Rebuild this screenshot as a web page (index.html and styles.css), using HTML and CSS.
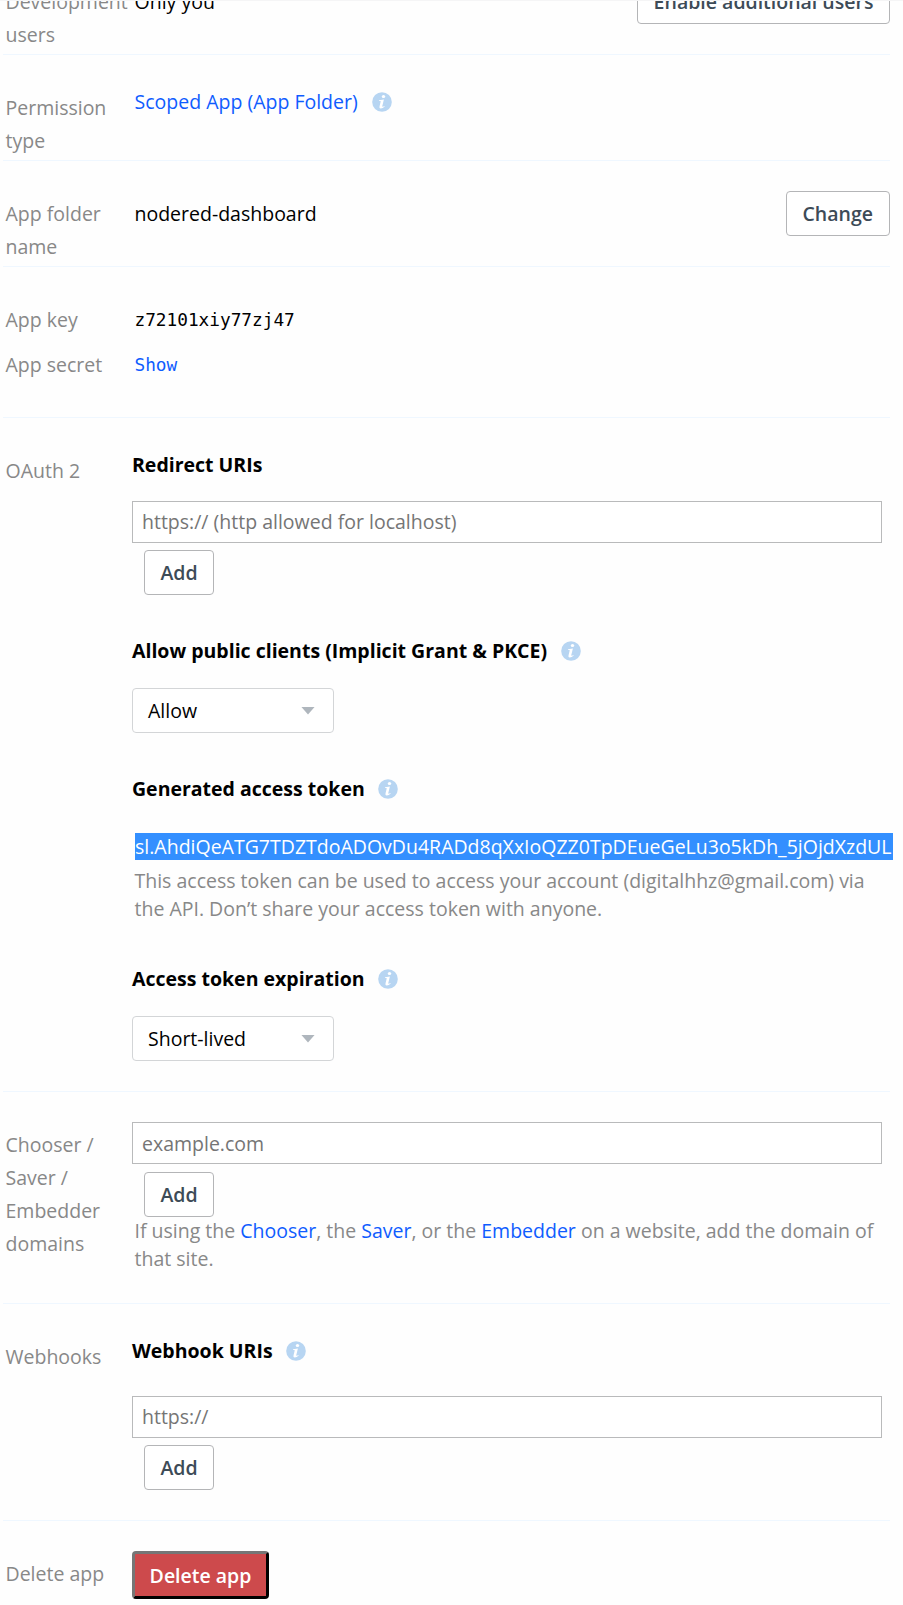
FILE: index.html
```html
<!DOCTYPE html>
<html lang="en">
<head>
<meta charset="utf-8">
<title>App settings</title>
<link rel="stylesheet" href="styles.css">
</head>
<body>
<svg class="sprite" aria-hidden="true">
  <symbol id="info" viewBox="0 0 20 20">
    <circle cx="10" cy="10" r="9.8" fill="#b7d5f2"/>
    <ellipse cx="11.5" cy="4.6" rx="1.7" ry="1.5" fill="#fff"/>
    <path d="M7.1 8.2 L11.9 7.6 L10.3 14 Q10.1 15 11 14.7 L12.4 13.9 L12.7 14.5 Q10.6 16.7 8.6 16.6 Q7 16.4 7.5 14.5 L8.7 9.6 Q8.8 9 8.2 9 L6.9 9 Z" fill="#fff"/>
  </symbol>
</svg>
<main class="settings">
  <section class="row">
    <div class="label">Development users</div>
    <div class="content split">
      <div class="value">Only you</div>
      <button class="btn enable">Enable additional users</button>
    </div>
  </section>
  <section class="row">
    <div class="label">Permission type</div>
    <div class="content">
      <div class="value scoped"><a>Scoped App (App Folder)</a><svg class="info"><use href="#info"/></svg></div>
    </div>
  </section>
  <section class="row">
    <div class="label">App folder name</div>
    <div class="content split">
      <div class="value">nodered-dashboard</div>
      <button class="btn">Change</button>
    </div>
  </section>
  <section class="row keys">
    <div class="label">App key</div>
    <div class="content"><div class="value mono">z72101xiy77zj47</div></div>
    <div class="label next">App secret</div>
    <div class="content next"><div class="value mono"><a>Show</a></div></div>
  </section>
  <section class="row oauth">
    <div class="label">OAuth 2</div>
    <div class="content">
      <h4 class="heading">Redirect URIs</h4>
      <input class="field" placeholder="https:// (http allowed for localhost)">
      <button class="btn add">Add</button>
      <h4 class="heading allow">Allow public clients (Implicit Grant &amp; PKCE)<svg class="info"><use href="#info"/></svg></h4>
      <div class="select">Allow<span class="caret"></span></div>
      <h4 class="heading generated">Generated access token<svg class="info"><use href="#info"/></svg></h4>
      <div class="token">sl.AhdiQeATG7TDZTdoADOvDu4RADd8qXxIoQZZ0TpDEueGeLu3o5kDh_5jOjdXzdUL</div>
      <p class="help">This access token can be used to access your account (digitalhhz@gmail.com) via<br>the API. Don’t share your access token with anyone.</p>
      <h4 class="heading expiration">Access token expiration<svg class="info"><use href="#info"/></svg></h4>
      <div class="select short">Short-lived<span class="caret"></span></div>
    </div>
  </section>
  <section class="row domains">
    <div class="label">Chooser / Saver / Embedder domains</div>
    <div class="content">
      <input class="field" placeholder="example.com">
      <button class="btn add">Add</button>
      <p class="help">If using the <a>Chooser</a>, the <a>Saver</a>, or the <a>Embedder</a> on a website, add the domain of<br>that site.</p>
    </div>
  </section>
  <section class="row webhooks">
    <div class="label">Webhooks</div>
    <div class="content">
      <h4 class="heading">Webhook URIs<svg class="info"><use href="#info"/></svg></h4>
      <input class="field" placeholder="https://">
      <button class="btn add">Add</button>
    </div>
  </section>
  <section class="row delete">
    <div class="label">Delete app</div>
    <div class="content"><button class="danger">Delete app</button></div>
  </section>
</main>
</body>
</html>
```
FILE: styles.css
```css
* { box-sizing: border-box; }
html { height: 1605px; overflow: hidden; background: #fefefe; }
body {
  margin: 0;
  height: 1605px;
  overflow: hidden;
  border-top: 1px solid #f5f5f6;
  font: 19.5px/28px "Open Sans", sans-serif;
  color: #000;
}
.sprite { display: none; }
.settings { width: 887px; margin: -52px 0 0 3px; }
.row {
  display: grid;
  grid-template-columns: 129px 1fr;
  align-content: start;
  height: 106px;
  border-bottom: 1px solid #eff7ff;
}
.label { width: 110px; padding: 36px 0 0 2.5px; line-height: 33px; color: #888; }
.content { padding-top: 30px; min-width: 0; }
.split { display: flex; justify-content: space-between; align-items: flex-start; }
.value { display: flex; align-items: center; padding-left: 2.5px; margin-top: 9px; white-space: nowrap; }
.value.scoped { margin-top: 3px; }
a { color: #0f5cff; }
.info { width: 20px; height: 20px; margin-left: 14px; flex: none; }
.btn {
  display: block;
  height: 45px;
  padding: 0 16px;
  border: 1px solid #b4b5b7;
  border-radius: 4px;
  background: #fff;
  color: #3d4b57;
  font: 600 19.5px/28px "Open Sans", sans-serif;
  white-space: nowrap;
}
.btn.enable { width: 253px; padding: 0; }
.btn.add { width: 70px; margin: 7px 0 0 12px; padding: 0; }
.keys { height: 151px; }
.mono { font-family: Consolas, "DejaVu Sans Mono", monospace; font-size: 17.75px; }
.keys .next { padding-top: 12px; }
.keys .content.next { padding-top: 6px; }
.keys .label { height: 69px; }
.keys .label.next { height: 45px; }
.field {
  display: block;
  width: 750px;
  height: 42px;
  padding: 0 9px 2px;
  border: 1px solid #b9babb;
  border-radius: 0;
  background: #fff;
  font: 19.5px/28px "Open Sans", sans-serif;
}
.domains .field { padding-bottom: 0; }
.field::placeholder { color: #757575; opacity: 1; }
.heading { display: flex; align-items: center; margin: 0; font-size: 19.5px; line-height: 28px; font-weight: 700; white-space: nowrap; }
.heading .info { margin: 0 0 1px 13.5px; }
.oauth { height: 674px; }
.oauth .content, .webhooks .content { padding-top: 33px; }
.heading + .field { margin-top: 22px; }
.allow { margin-top: 42px; }
.select {
  display: flex;
  align-items: center;
  justify-content: space-between;
  width: 202px;
  height: 45px;
  margin-top: 23px;
  padding: 0 18px 0 15px;
  border: 1px solid #d3d5d7;
  border-radius: 4px;
  background: #fff;
}
.caret { width: 14px; height: 8px; background: #afb6bd; clip-path: polygon(0 0, 100% 0, 50% 100%); }
.generated { margin-top: 42px; }
.token { width: 758px; height: 27px; margin: 30px 0 0 3px; line-height: 27px; background: #338fff; color: #fff; white-space: nowrap; }
.help { margin: 7px 0 0 2.5px; color: #888; white-space: nowrap; }
.expiration { margin-top: 42px; }
.domains { height: 212px; }
.domains .add { margin-top: 8px; }
.domains .help { margin-top: 0; }
.webhooks { height: 217px; }
.webhooks .heading + .field { margin-top: 31px; }
.delete { border: 0; height: 84px; }
.danger {
  display: block;
  width: 137px;
  height: 48px;
  padding: 2px 0 0;
  border: 3px outset #000;
  border-color: #767676 #212121 #212121 #767676;
  border-radius: 4px;
  background: #cd4a4c;
  color: #fff;
  font: 600 19.5px/28px "Open Sans", sans-serif;
}
```
